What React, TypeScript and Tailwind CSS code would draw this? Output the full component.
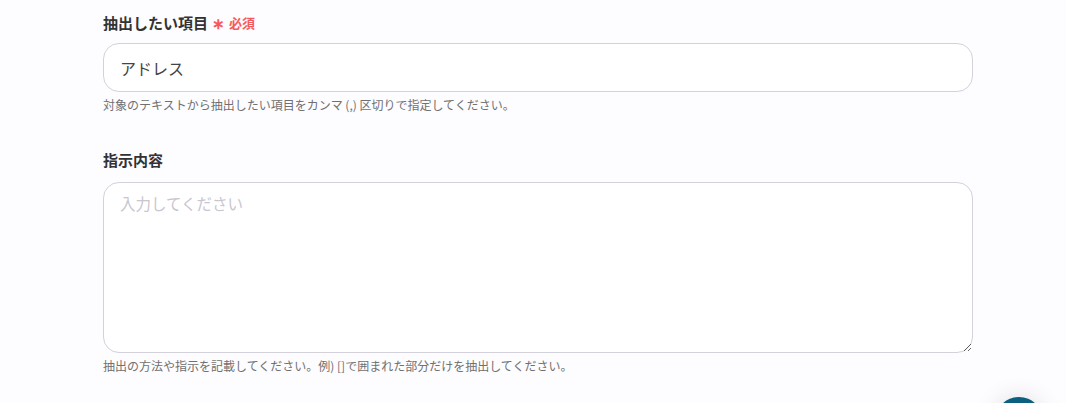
export default function App() {
  return (
    <div
      className="relative h-[403px] w-full overflow-hidden bg-[#fdfcfe] text-[#333]"
      style={{ fontFamily: '"Noto Sans CJK JP", "Noto Sans", sans-serif' }}
    >
      <div className="ml-[103px] w-[870px] pt-[11px]">
        {/* 抽出したい項目 */}
        <div className="flex items-center gap-[4px] h-[22px]">
          <span className="text-[15px] font-bold leading-none">抽出したい項目</span>
          <span className="text-[15px] font-bold text-[#f55a5a] leading-none">∗</span>
          <span className="text-[13px] font-bold text-[#f55a5a] leading-none">必須</span>
        </div>
        <div className="mt-[10px] flex h-[49px] items-center rounded-[16px] border border-[#d3d1db] bg-white px-[16px]">
          <span className="text-[16px] text-[#444]">アドレス</span>
        </div>
        <p className="mt-[4px] text-[12px] leading-[18px] text-[#707070]">
          対象のテキストから抽出したい項目をカンマ (,) 区切りで指定してください。
        </p>

        {/* 指示内容 */}
        <div className="mt-[34px] flex items-center h-[22px]">
          <span className="text-[15px] font-bold leading-none">指示内容</span>
        </div>
        <textarea
          placeholder="入力してください"
          className="mt-[12px] block h-[171px] w-full resize-y rounded-[16px] border border-[#d3d1db] bg-white px-[16px] py-[9px] text-[15.5px] text-[#444] outline-none placeholder:text-[#c8c6cf]"
        />
        <p className="mt-[4px] text-[12px] leading-[18px] text-[#707070]">
          抽出の方法や指示を記載してください。例) []で囲まれた部分だけを抽出してください。
        </p>
      </div>

      {/* floating button */}
      <div className="absolute left-[995px] top-[397px] h-[48px] w-[48px] rounded-full bg-[#0b5f7f] shadow-[0_0_24px_rgba(0,0,0,0.12)]" />
    </div>
  );
}
